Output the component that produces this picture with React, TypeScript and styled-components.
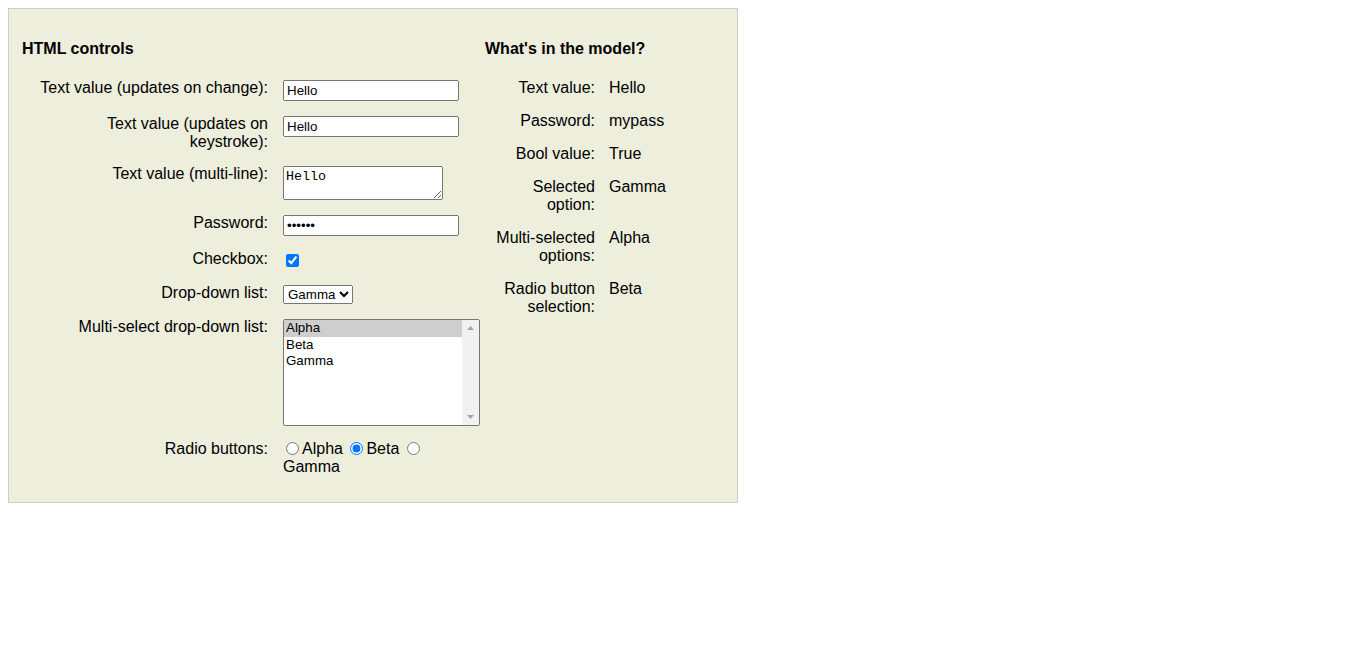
import React from 'react';
import styled, { createGlobalStyle } from 'styled-components';

const Global = createGlobalStyle`
  body {
    margin: 8px;
    font-family: "Liberation Sans", Arial, sans-serif;
    font-size: 16px;
    line-height: 18px;
    color: #000;
    background: #fff;
  }
`;

const Panel = styled.div`
  box-sizing: border-box;
  width: 730px;
  height: 495px;
  padding: 30.5px 14px 0 13px;
  border: 1px solid #ccc;
  background: #eeeedd;
  display: flex;
  gap: 5px;
  align-items: flex-start;
`;

const Column = styled.section<{ $width: number }>`
  width: ${(p) => p.$width}px;
  flex: none;
`;

const Heading = styled.h3`
  margin: 0 0 21px 0;
  font-size: 16px;
  line-height: 18px;
  font-weight: bold;
`;

const FormGrid = styled.div`
  display: grid;
  grid-template-columns: 246px 197px;
  column-gap: 15px;
  row-gap: 14px;
  align-items: start;
`;

const ReadGrid = styled.div`
  display: grid;
  grid-template-columns: 110px 1fr;
  column-gap: 14px;
  row-gap: 15px;
  align-items: start;
`;

const Label = styled.div`
  text-align: right;
  padding-left: 12px;
`;

const ReadLabel = styled.div`
  text-align: right;
`;

const Value = styled.div``;

const Cell = styled.div<{ $h?: number; $pt?: number }>`
  box-sizing: border-box;
  padding-top: ${(p) => p.$pt ?? 1}px;
  ${(p) => (p.$h ? `height: ${p.$h}px;` : '')}
`;

const TextInput = styled.input`
  box-sizing: border-box;
  width: 176px;
  height: 21px;
  font-family: "Liberation Sans", Arial, sans-serif;
  font-size: 13.33px;
  margin: 0;
  display: block;
`;

const TextArea = styled.textarea`
  box-sizing: border-box;
  width: 160px;
  height: 34px;
  font-family: "Liberation Mono", "Courier New", monospace;
  font-size: 13.33px;
  margin: 0;
  display: block;
`;

const Check = styled.input`
  width: 13px;
  height: 13px;
  margin: 0 0 0 3px;
  display: block;
`;

const DropDown = styled.select`
  font-family: "Liberation Sans", Arial, sans-serif;
  font-size: 13.33px;
  height: 19px;
  margin: 0;
  display: block;
`;

const ListBox = styled.div`
  box-sizing: border-box;
  width: 197px;
  height: 107px;
  border: 1px solid #767676;
  border-radius: 2px;
  background: #fff;
  display: flex;
  overflow: hidden;
`;

const OptionList = styled.div`
  flex: 1;
  font-family: "Liberation Sans", Arial, sans-serif;
  font-size: 13.33px;
  line-height: 15.33px;
`;

const Option = styled.div<{ $selected?: boolean }>`
  padding: 0 2px 1.33px 2px;
  background: ${(p) => (p.$selected ? '#cecece' : 'transparent')};
  color: #000;
`;

const ScrollTrack = styled.div`
  width: 17px;
  flex: none;
  background: #f1f1f1;
  display: flex;
  flex-direction: column;
  justify-content: space-between;
  align-items: center;
  padding: 6px 0;
  box-sizing: border-box;
`;

const RadioGroup = styled.div`
  max-width: 182px;
`;

const RadioLabel = styled.label`
  font-size: 16px;
`;

const Radio = styled.input`
  width: 13px;
  height: 13px;
  margin: 0 3px 0 3px;
  vertical-align: -1px;
`;

const Arrow = ({ up }: { up?: boolean }) => (
  <svg width="7" height="4" viewBox="0 0 7 4">
    <path d={up ? 'M0 4 L3.5 0 L7 4 Z' : 'M0 0 L3.5 4 L7 0 Z'} fill="#a3a3a3" />
  </svg>
);

export default function App() {
  return (
    <>
      <Global />
      <Panel>
        <Column $width={458}>
          <Heading>HTML controls</Heading>
          <FormGrid>
            <Label>Text value (updates on change):</Label>
            <Cell>
              <TextInput type="text" defaultValue="Hello" />
            </Cell>

            <Label>Text value (updates on keystroke):</Label>
            <Cell>
              <TextInput type="text" defaultValue="Hello" />
            </Cell>

            <Label>Text value (multi-line):</Label>
            <Cell $pt={1.5}>
              <TextArea defaultValue="Hello" />
            </Cell>

            <Label>Password:</Label>
            <Cell>
              <TextInput type="password" defaultValue="mypass" />
            </Cell>

            <Label>Checkbox:</Label>
            <Cell $pt={4} $h={20}>
              <Check type="checkbox" defaultChecked />
            </Cell>

            <Label>Drop-down list:</Label>
            <Cell>
              <DropDown defaultValue="Gamma">
                <option>Alpha</option>
                <option>Beta</option>
                <option>Gamma</option>
              </DropDown>
            </Cell>

            <Label>Multi-select drop-down list:</Label>
            <Cell>
              <ListBox role="listbox" aria-multiselectable="true">
                <OptionList>
                  <Option $selected role="option" aria-selected="true">Alpha</Option>
                  <Option role="option" aria-selected="false">Beta</Option>
                  <Option role="option" aria-selected="false">Gamma</Option>
                </OptionList>
                <ScrollTrack>
                  <Arrow up />
                  <Arrow />
                </ScrollTrack>
              </ListBox>
            </Cell>

            <Label>Radio buttons:</Label>
            <RadioGroup>
              <RadioLabel>
                <Radio type="radio" name="r" value="Alpha" />Alpha
              </RadioLabel>{' '}
              <RadioLabel>
                <Radio type="radio" name="r" value="Beta" defaultChecked />Beta
              </RadioLabel>{' '}
              <RadioLabel>
                <Radio type="radio" name="r" value="Gamma" />Gamma
              </RadioLabel>
            </RadioGroup>
          </FormGrid>
        </Column>

        <Column $width={230}>
          <Heading>What's in the model?</Heading>
          <ReadGrid>
            <ReadLabel>Text value:</ReadLabel>
            <Value>Hello</Value>
            <ReadLabel>Password:</ReadLabel>
            <Value>mypass</Value>
            <ReadLabel>Bool value:</ReadLabel>
            <Value>True</Value>
            <ReadLabel>Selected option:</ReadLabel>
            <Value>Gamma</Value>
            <ReadLabel>Multi-selected options:</ReadLabel>
            <Value>Alpha</Value>
            <ReadLabel>Radio button selection:</ReadLabel>
            <Value>Beta</Value>
          </ReadGrid>
        </Column>
      </Panel>
    </>
  );
}
